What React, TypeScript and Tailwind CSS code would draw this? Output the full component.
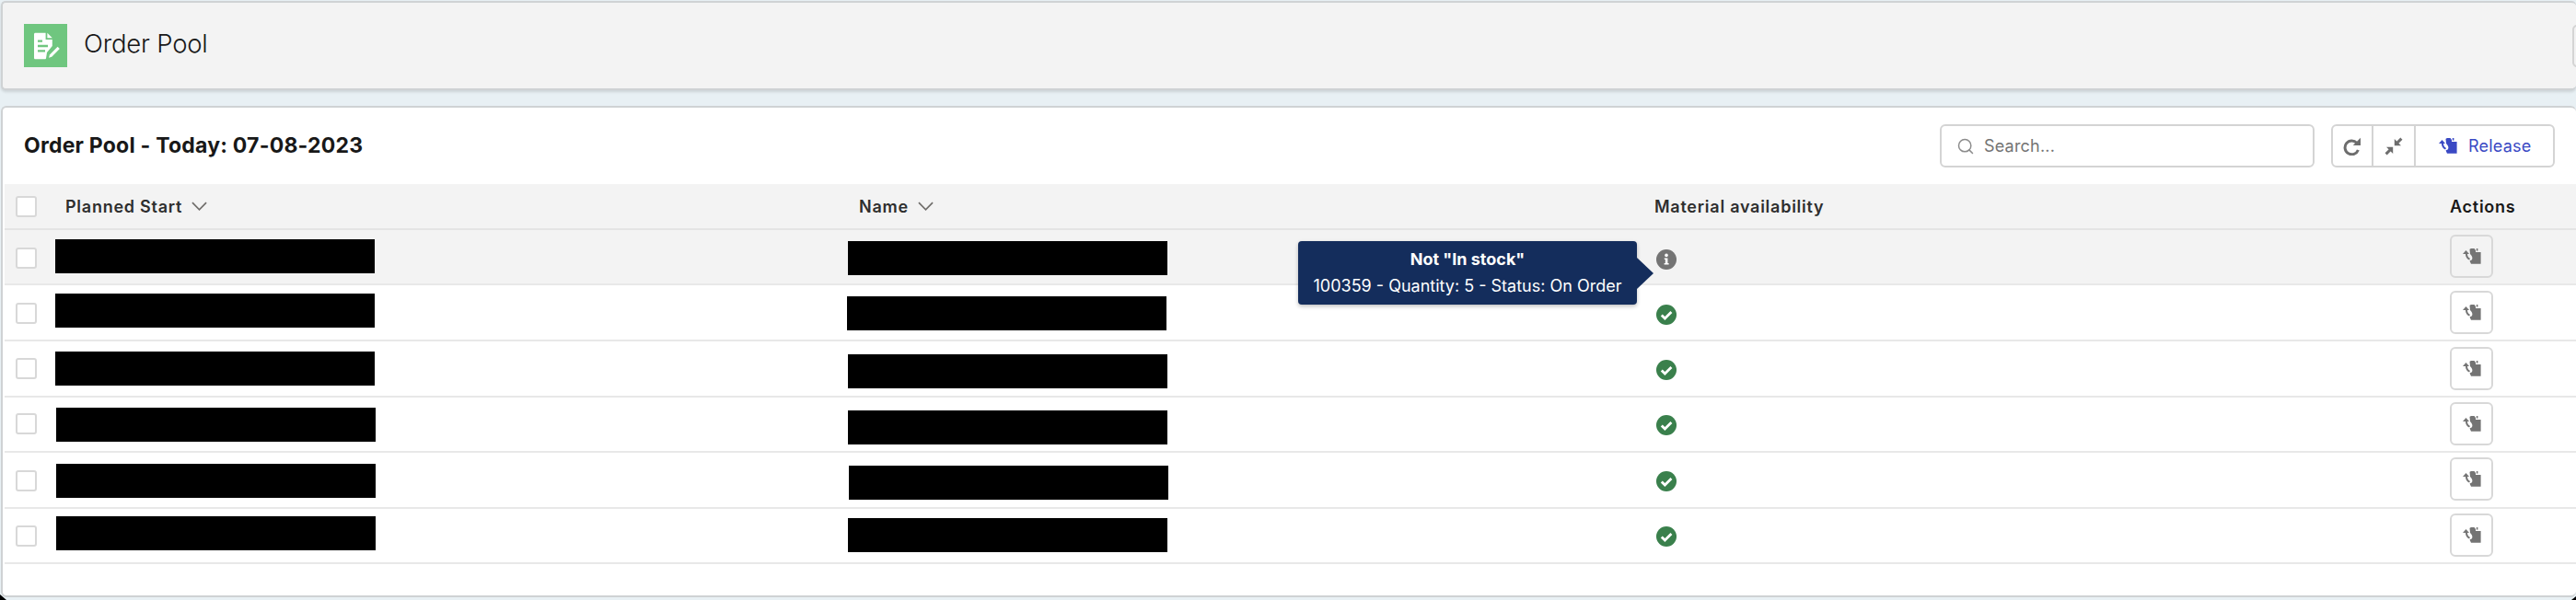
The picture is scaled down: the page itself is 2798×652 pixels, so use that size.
import React from "react";
import { Search } from "lucide-react";

const FONT = "font-['Inter','Liberation_Sans',sans-serif]";

function HandIcon({ className }: { className: string }) {
  return (
    <svg viewBox="0 0 20 17" className={className} fill="currentColor" aria-hidden="true">
      <path d="M7.5 1 C8 .2 9 0 10 0 H12.5 L14 2 V4 H19.6 V16.8 H9 L7.5 13.4 L10 12.2 C11 10 10 8 8 6 Z" />
      <path d="M14.8 0 H16.4 V2.6 H14.8 Z" />
      <path d="M3.5 2 L7 6 H5 C5 8 6 10 8 11 L7 12.6 C4.5 11.5 3 9 3 6 H0 Z" />
    </svg>
  );
}

function Chevron() {
  return (
    <svg viewBox="0 0 18 10" className="w-[17px] h-[10px] text-[#706e6b]" fill="none" stroke="currentColor" strokeWidth="1.8" aria-hidden="true">
      <path d="M1 1 L9 9 L17 1" />
    </svg>
  );
}

function CheckBox({ className }: { className: string }) {
  return <div className={`w-[23px] h-[23px] ml-[12px] bg-white border-2 border-[#d8d8d8] rounded-[3px] ${className}`} />;
}

function StatusIcon({ kind, className }: { kind: "info" | "ok"; className: string }) {
  if (kind === "info") {
    return (
      <svg viewBox="0 0 22 22" className={`w-[22px] h-[22px] ${className}`} aria-hidden="true">
        <circle cx="11" cy="11" r="11" fill="#747474" />
        <circle cx="11" cy="6.4" r="1.8" fill="#fff" />
        <path d="M8.8 9.4 H12.4 V15 H13.6 V16.6 H8.6 V15 H9.8 V11 H8.8 Z" fill="#fff" />
      </svg>
    );
  }
  return (
    <svg viewBox="0 0 22 22" className={`w-[22px] h-[22px] ${className}`} aria-hidden="true">
      <circle cx="11" cy="11" r="11" fill="#3a804c" />
      <path d="M5.8 11.4 L9.4 15 L16.4 8" fill="none" stroke="#fff" strokeWidth="2.8" />
    </svg>
  );
}

type Row = {
  h: string;
  bg: string;
  box: string;
  start: string;
  name: string;
  icon: string;
  action: string;
};

const ROWS: Row[] = [
  { h: "h-[60px]", bg: "bg-[#f3f3f3]", box: "mt-[19px]", start: "mt-[10px] -ml-[11px]", name: "mt-[12px] -ml-[12px]", icon: "mt-[21px]", action: "mt-[5px]" },
  { h: "h-[61px]", bg: "bg-white", box: "mt-[19px]", start: "mt-[9px] -ml-[11px]", name: "mt-[12px] -ml-[13px]", icon: "mt-[21px]", action: "mt-[6px]" },
  { h: "h-[61px]", bg: "bg-white", box: "mt-[18px]", start: "mt-[11px] -ml-[11px]", name: "mt-[14px] -ml-[12px]", icon: "mt-[20px]", action: "mt-[6px]" },
  { h: "h-[60px]", bg: "bg-white", box: "mt-[17px]", start: "mt-[11px] -ml-[10px]", name: "mt-[14px] -ml-[12px]", icon: "mt-[19px]", action: "mt-[5px]" },
  { h: "h-[61px]", bg: "bg-white", box: "mt-[19px]", start: "mt-[12px] -ml-[10px]", name: "mt-[14px] -ml-[11px]", icon: "mt-[20px]", action: "mt-[5px]" },
  { h: "h-[60px]", bg: "bg-white", box: "mt-[18px]", start: "mt-[8px] -ml-[10px]", name: "mt-[10px] -ml-[12px]", icon: "mt-[19px]", action: "mt-[5px]" },
];

const GRID = "grid grid-cols-[66px_862px_864px_864px_136px]";

export default function App() {
  return (
    <div className={`${FONT} relative w-[2798px] h-[652px] overflow-hidden bg-[#e8f0f4] pt-[1px] pl-[1px] flex flex-col`}>
      <header className="h-[97px] shrink-0 bg-[#f3f3f3] border-t-2 border-l-2 border-b-2 border-[#cfd2d4] rounded-[5px] shadow-[0_2px_3px_rgba(0,0,0,0.12)] flex items-center pl-[23px] overflow-hidden">
        <div className="w-[47px] h-[47px] bg-[#6fc67f] flex items-center justify-center">
          <svg viewBox="0 0 30 30" className="w-[30px] h-[30px]" aria-hidden="true">
            <path d="M2 2.2 C2 1.4 2.6 .8 3.4 .8 H14.6 V8 H21.8 V15 L16 22 L15 28.4 C15 28.8 14.4 29.3 13.8 29.3 H3.4 C2.6 29.3 2 28.7 2 27.9 Z" fill="#fff" />
            <path d="M16.4 .8 L21.8 6.2 H16.4 Z" fill="#fff" />
            <path d="M6 9.6 H11 M6 15 H17 M6 20.4 H14" stroke="#6fc67f" strokeWidth="2.4" fill="none" />
            <path d="M19 24.6 L27.6 15.8 L29.8 18 L21.2 26.8 L18 27.8 Z" fill="#fff" />
          </svg>
        </div>
        <h1 className="ml-[18px] mb-[3px] text-[27.5px] font-light text-[#181818] tracking-[-0.2px]">Order Pool</h1>
        <div className="ml-auto -mr-[8px] w-[12px] h-[46px] bg-[#f3f3f3] border-2 border-[#d4d4d4] rounded-[5px]" />
      </header>

      <section className="mt-[17px] h-[534px] shrink-0 bg-white border-t-2 border-l-2 border-b-2 border-[#cfd2d4] rounded-[6px] flex flex-col">
        <div className="h-[83px] shrink-0 flex items-center pl-[23px]">
          <h2 className="text-[23px] font-bold text-[#181818] tracking-[0.22px]">Order Pool - Today: 07-08-2023</h2>
          <div className="ml-auto mr-[23px] flex items-center">
            <div className="w-[407px] h-[47px] border-2 border-[#d4d4d4] rounded-[6px] flex items-center pl-[16px] gap-[10px]">
              <Search className="w-[20px] h-[20px] text-[#8c8c8c]" strokeWidth={1.8} />
              <span className="text-[18px] tracking-[0.2px] text-[#747474]">Search...</span>
            </div>
            <div className="ml-[18px] w-[243px] h-[47px] border-2 border-[#d4d4d4] rounded-[6px] flex items-stretch">
              <div className="w-[44px] border-r-2 border-[#d4d4d4] flex items-center justify-center">
                <svg viewBox="0 0 20 20" className="w-[20px] h-[20px] text-[#6d6d6d]" fill="none" aria-hidden="true">
                  <path d="M15 6.4 A7.4 7.4 0 1 0 16.4 14" stroke="currentColor" strokeWidth="3" />
                  <path d="M19 .8 V9 H10.8 Z" fill="currentColor" />
                </svg>
              </div>
              <div className="w-[46px] border-r-2 border-[#d4d4d4] flex items-center justify-center">
                <svg viewBox="0 0 20 20" className="w-[20px] h-[20px] text-[#6d6d6d]" fill="none" aria-hidden="true">
                  <path d="M10.8 2 V9.2 H18 Z M2 10.8 H9.2 V18 Z" fill="currentColor" />
                  <path d="M13 7 L18.4 1.6 M7 13 L1.6 18.4" stroke="currentColor" strokeWidth="3" />
                </svg>
              </div>
              <div className="flex-1 flex items-center pl-[25px] gap-[12px] text-[#3a49c4]">
                <HandIcon className="w-[20px] h-[17px]" />
                <span className="text-[18px] tracking-[0.2px]">Release</span>
              </div>
            </div>
          </div>
        </div>

        <div className="ml-[2px] w-[2793px] overflow-hidden">
          <div className={`${GRID} h-[50px] bg-[#f3f3f3] border-b-2 border-[#e4e4e4] items-center text-[18px] font-semibold text-[#2e2e2e] tracking-[0.75px]`}>
            <CheckBox className="" />
            <div className="flex items-center gap-[10px]"><span>Planned Start</span><Chevron /></div>
            <div className="flex items-center gap-[10px]"><span>Name</span><Chevron /></div>
            <div>Material availability</div>
            <div className="text-[#181818]">Actions</div>
          </div>

          {ROWS.map((r, i) => (
            <div key={i} className={`${GRID} ${r.h} ${r.bg} border-b-2 border-[#e8e8e8] items-start`}>
              <CheckBox className={r.box} />
              <div className={`w-[347px] h-[37px] bg-black ${r.start}`} />
              <div className={`w-[347px] h-[37px] bg-black ${r.name}`} />
              <div className="relative pl-[2px]">
                <StatusIcon kind={i === 0 ? "info" : "ok"} className={r.icon} />
                {i === 0 && (
                  <div className="absolute left-[-387px] top-[12px] w-[368px] h-[69px] bg-[#142d5c] rounded-[4px] shadow-[0_2px_4px_rgba(0,0,0,0.25)] text-white text-center text-[18px] flex flex-col justify-center gap-[5px]">
                    <div className="font-bold leading-[24px]">Not "In stock"</div>
                    <div className="leading-[24px]">100359 - Quantity: 5 - Status: On Order</div>
                    <div className="absolute left-[368px] top-[18px] w-0 h-0 border-y-[17px] border-y-transparent border-l-[18px] border-l-[#142d5c]" />
                  </div>
                )}
              </div>
              <div className={`w-[47px] h-[47px] border-2 border-[#d8d8d8] rounded-[6px] flex items-center justify-center text-[#747474] ${r.action} ${i === 0 ? "bg-[#f3f3f3]" : "bg-white"}`}>
                <HandIcon className="w-[20px] h-[17px]" />
              </div>
            </div>
          ))}
        </div>
      </section>

      <svg viewBox="0 0 7 6" className="absolute left-0 bottom-0 w-[7px] h-[6px]" aria-hidden="true"><path d="M0 0 L7 6 H0 Z" fill="#000" /></svg>
      <svg viewBox="0 0 5 4" className="absolute right-0 bottom-0 w-[5px] h-[4px]" aria-hidden="true"><path d="M5 0 V4 H0 Z" fill="#000" /></svg>
    </div>
  );
}
